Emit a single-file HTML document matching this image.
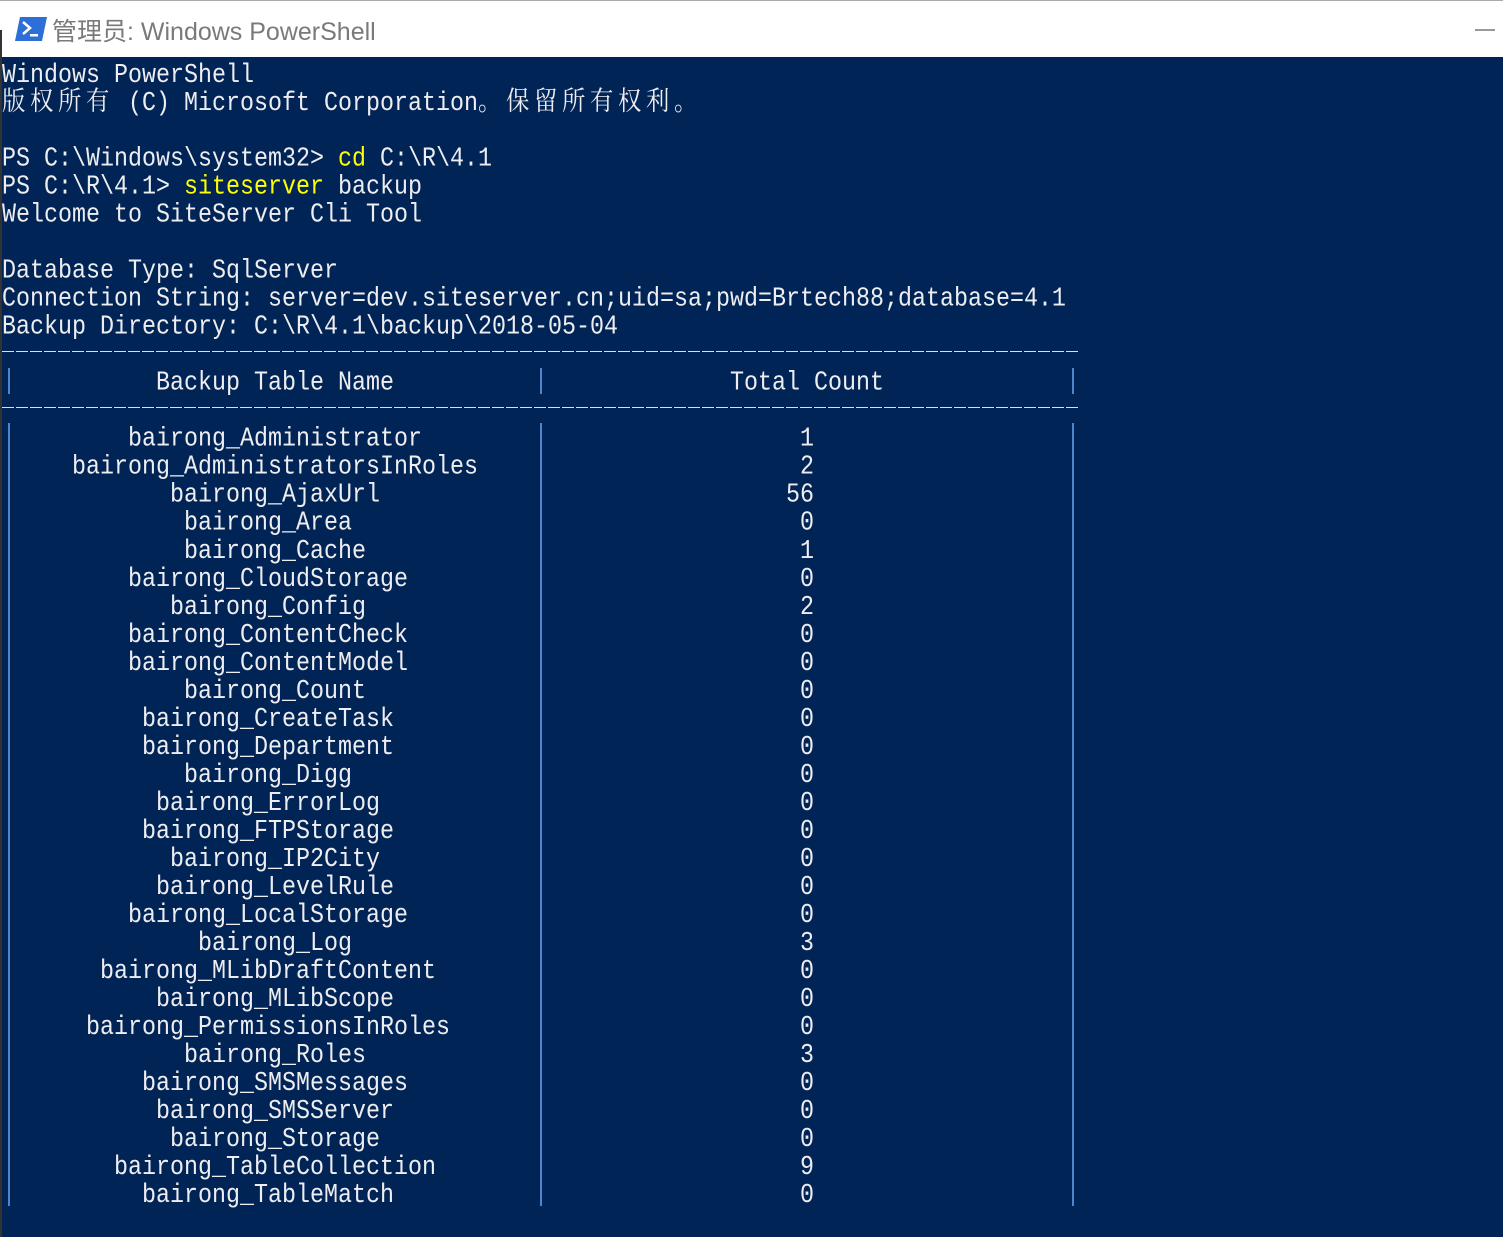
<!DOCTYPE html>
<html><head><meta charset="utf-8"><style>
html,body{margin:0;padding:0}
body{width:1503px;height:1237px;background:#012456;position:relative;overflow:hidden;font-family:"Liberation Mono","Noto Serif CJK SC",monospace;color:#eeedf0}
#tb{position:absolute;left:0;top:0;width:1503px;height:57px;background:#fff;border-top:1px solid #aaa;box-sizing:border-box}
#tt{position:absolute;left:52px;top:11px;font-family:"Liberation Sans","Noto Sans CJK SC",sans-serif;font-size:25px;color:#7a7a7a}
#min{position:absolute;left:1475px;top:28px;width:20px;height:2px;background:#999}
.edge{position:absolute;left:0;top:30px;width:2px;height:1207px;background:#333}
.l,.c{position:absolute;height:28px;line-height:28px;font-size:23.33px;white-space:pre;transform:scaleY(1.15);transform-origin:50% 50%}
.l{left:2px}
.cj{letter-spacing:4.67px}
.y{color:#ffff00}
.d{position:absolute;left:2px;width:1077px;height:1px;background:repeating-linear-gradient(90deg,#e0e0e0 0 12px,transparent 12px 14px)}
.v{position:absolute;width:2px;background:#4f86c9}
</style></head><body>
<div id="tb">
<svg style="position:absolute;left:15px;top:16px" width="32" height="24" viewBox="0 0 32 24"><polygon points="5,0 32,0 27,24 0,24" fill="#2c6fd6"/><polyline points="8,5 15,11 8,17" fill="none" stroke="#fff" stroke-width="2.5"/><rect x="15" y="17" width="8" height="2.5" fill="#fff"/></svg>
<div id="tt">管理员: Windows PowerShell</div>
<div id="min"></div>
</div>
<div class="edge"></div>
<div class="l" style="top:62px">Windows PowerShell</div>
<div class="l" style="top:90px"><span class="cj">版权所有</span> (C) Microsoft Corporation<span class="cj">。保留所有权利。</span></div>
<div class="l" style="top:146px">PS C:\Windows\system32&gt; <span class="y">cd</span> C:\R\4.1</div>
<div class="l" style="top:174px">PS C:\R\4.1&gt; <span class="y">siteserver</span> backup</div>
<div class="l" style="top:202px">Welcome to SiteServer Cli Tool</div>
<div class="l" style="top:258px">Database Type: SqlServer</div>
<div class="l" style="top:286px">Connection String: server=dev.siteserver.cn;uid=sa;pwd=Brtech88;database=4.1</div>
<div class="l" style="top:314px">Backup Directory: C:\R\4.1\backup\2018-05-04</div>
<div class="d" style="top:351px"></div>
<div class="d" style="top:407px"></div>
<div class="v" style="left:8px;top:368px;height:26px"></div>
<div class="v" style="left:540px;top:368px;height:26px"></div>
<div class="v" style="left:1072px;top:368px;height:26px"></div>
<div class="c" style="top:370px;left:156px">Backup Table Name</div>
<div class="c" style="top:370px;left:730px">Total Count</div>
<div class="v" style="left:8px;top:423px;height:783px"></div>
<div class="v" style="left:540px;top:423px;height:783px"></div>
<div class="v" style="left:1072px;top:423px;height:783px"></div>
<div class="c" style="top:426px;left:128px">bairong_Administrator</div><div class="c" style="top:426px;left:800px">1</div>
<div class="c" style="top:454px;left:72px">bairong_AdministratorsInRoles</div><div class="c" style="top:454px;left:800px">2</div>
<div class="c" style="top:482px;left:170px">bairong_AjaxUrl</div><div class="c" style="top:482px;left:786px">56</div>
<div class="c" style="top:510px;left:184px">bairong_Area</div><div class="c" style="top:510px;left:800px">0</div>
<div class="c" style="top:538px;left:184px">bairong_Cache</div><div class="c" style="top:538px;left:800px">1</div>
<div class="c" style="top:566px;left:128px">bairong_CloudStorage</div><div class="c" style="top:566px;left:800px">0</div>
<div class="c" style="top:594px;left:170px">bairong_Config</div><div class="c" style="top:594px;left:800px">2</div>
<div class="c" style="top:622px;left:128px">bairong_ContentCheck</div><div class="c" style="top:622px;left:800px">0</div>
<div class="c" style="top:650px;left:128px">bairong_ContentModel</div><div class="c" style="top:650px;left:800px">0</div>
<div class="c" style="top:678px;left:184px">bairong_Count</div><div class="c" style="top:678px;left:800px">0</div>
<div class="c" style="top:706px;left:142px">bairong_CreateTask</div><div class="c" style="top:706px;left:800px">0</div>
<div class="c" style="top:734px;left:142px">bairong_Department</div><div class="c" style="top:734px;left:800px">0</div>
<div class="c" style="top:762px;left:184px">bairong_Digg</div><div class="c" style="top:762px;left:800px">0</div>
<div class="c" style="top:790px;left:156px">bairong_ErrorLog</div><div class="c" style="top:790px;left:800px">0</div>
<div class="c" style="top:818px;left:142px">bairong_FTPStorage</div><div class="c" style="top:818px;left:800px">0</div>
<div class="c" style="top:846px;left:170px">bairong_IP2City</div><div class="c" style="top:846px;left:800px">0</div>
<div class="c" style="top:874px;left:156px">bairong_LevelRule</div><div class="c" style="top:874px;left:800px">0</div>
<div class="c" style="top:902px;left:128px">bairong_LocalStorage</div><div class="c" style="top:902px;left:800px">0</div>
<div class="c" style="top:930px;left:198px">bairong_Log</div><div class="c" style="top:930px;left:800px">3</div>
<div class="c" style="top:958px;left:100px">bairong_MLibDraftContent</div><div class="c" style="top:958px;left:800px">0</div>
<div class="c" style="top:986px;left:156px">bairong_MLibScope</div><div class="c" style="top:986px;left:800px">0</div>
<div class="c" style="top:1014px;left:86px">bairong_PermissionsInRoles</div><div class="c" style="top:1014px;left:800px">0</div>
<div class="c" style="top:1042px;left:184px">bairong_Roles</div><div class="c" style="top:1042px;left:800px">3</div>
<div class="c" style="top:1070px;left:142px">bairong_SMSMessages</div><div class="c" style="top:1070px;left:800px">0</div>
<div class="c" style="top:1098px;left:156px">bairong_SMSServer</div><div class="c" style="top:1098px;left:800px">0</div>
<div class="c" style="top:1126px;left:170px">bairong_Storage</div><div class="c" style="top:1126px;left:800px">0</div>
<div class="c" style="top:1154px;left:114px">bairong_TableCollection</div><div class="c" style="top:1154px;left:800px">9</div>
<div class="c" style="top:1182px;left:142px">bairong_TableMatch</div><div class="c" style="top:1182px;left:800px">0</div>
</body></html>
